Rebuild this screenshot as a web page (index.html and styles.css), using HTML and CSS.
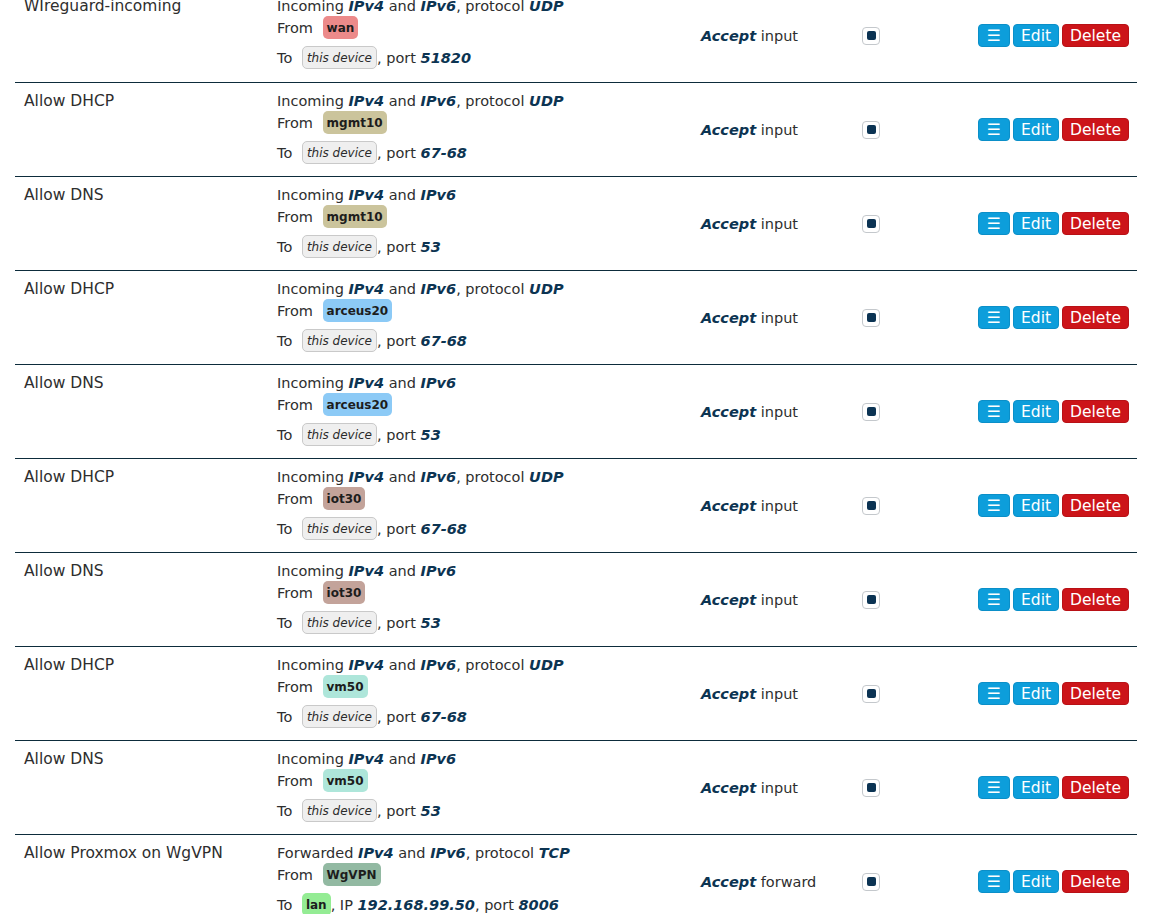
FILE: index.html
```html
<!DOCTYPE html>
<html>
<head>
<meta charset="utf-8">
<link rel="stylesheet" href="styles.css">
</head>
<body>
<div class="table">
  <div class="row">
    <div class="name">WIreguard-incoming</div>
    <div class="match">
      <div class="l1">Incoming <b>IPv4</b> and <b>IPv6</b>, protocol <b>UDP</b></div>
      <div class="l2">From <span class="zone z-wan">wan</span></div>
      <div class="l3">To <span class="dev">this device</span>, port <b>51820</b></div>
    </div>
    <div class="action"><b>Accept</b> input</div>
    <div class="chk"><span class="box"><span class="dot"></span></span></div>
    <div class="btns"><span class="btn blue">☰</span><span class="btn blue">Edit</span><span class="btn red">Delete</span></div>
  </div>
  <div class="row">
    <div class="name">Allow DHCP</div>
    <div class="match">
      <div class="l1">Incoming <b>IPv4</b> and <b>IPv6</b>, protocol <b>UDP</b></div>
      <div class="l2">From <span class="zone z-mgmt">mgmt10</span></div>
      <div class="l3">To <span class="dev">this device</span>, port <b>67-68</b></div>
    </div>
    <div class="action"><b>Accept</b> input</div>
    <div class="chk"><span class="box"><span class="dot"></span></span></div>
    <div class="btns"><span class="btn blue">☰</span><span class="btn blue">Edit</span><span class="btn red">Delete</span></div>
  </div>
  <div class="row">
    <div class="name">Allow DNS</div>
    <div class="match">
      <div class="l1">Incoming <b>IPv4</b> and <b>IPv6</b></div>
      <div class="l2">From <span class="zone z-mgmt">mgmt10</span></div>
      <div class="l3">To <span class="dev">this device</span>, port <b>53</b></div>
    </div>
    <div class="action"><b>Accept</b> input</div>
    <div class="chk"><span class="box"><span class="dot"></span></span></div>
    <div class="btns"><span class="btn blue">☰</span><span class="btn blue">Edit</span><span class="btn red">Delete</span></div>
  </div>
  <div class="row">
    <div class="name">Allow DHCP</div>
    <div class="match">
      <div class="l1">Incoming <b>IPv4</b> and <b>IPv6</b>, protocol <b>UDP</b></div>
      <div class="l2">From <span class="zone z-arceus">arceus20</span></div>
      <div class="l3">To <span class="dev">this device</span>, port <b>67-68</b></div>
    </div>
    <div class="action"><b>Accept</b> input</div>
    <div class="chk"><span class="box"><span class="dot"></span></span></div>
    <div class="btns"><span class="btn blue">☰</span><span class="btn blue">Edit</span><span class="btn red">Delete</span></div>
  </div>
  <div class="row">
    <div class="name">Allow DNS</div>
    <div class="match">
      <div class="l1">Incoming <b>IPv4</b> and <b>IPv6</b></div>
      <div class="l2">From <span class="zone z-arceus">arceus20</span></div>
      <div class="l3">To <span class="dev">this device</span>, port <b>53</b></div>
    </div>
    <div class="action"><b>Accept</b> input</div>
    <div class="chk"><span class="box"><span class="dot"></span></span></div>
    <div class="btns"><span class="btn blue">☰</span><span class="btn blue">Edit</span><span class="btn red">Delete</span></div>
  </div>
  <div class="row">
    <div class="name">Allow DHCP</div>
    <div class="match">
      <div class="l1">Incoming <b>IPv4</b> and <b>IPv6</b>, protocol <b>UDP</b></div>
      <div class="l2">From <span class="zone z-iot">iot30</span></div>
      <div class="l3">To <span class="dev">this device</span>, port <b>67-68</b></div>
    </div>
    <div class="action"><b>Accept</b> input</div>
    <div class="chk"><span class="box"><span class="dot"></span></span></div>
    <div class="btns"><span class="btn blue">☰</span><span class="btn blue">Edit</span><span class="btn red">Delete</span></div>
  </div>
  <div class="row">
    <div class="name">Allow DNS</div>
    <div class="match">
      <div class="l1">Incoming <b>IPv4</b> and <b>IPv6</b></div>
      <div class="l2">From <span class="zone z-iot">iot30</span></div>
      <div class="l3">To <span class="dev">this device</span>, port <b>53</b></div>
    </div>
    <div class="action"><b>Accept</b> input</div>
    <div class="chk"><span class="box"><span class="dot"></span></span></div>
    <div class="btns"><span class="btn blue">☰</span><span class="btn blue">Edit</span><span class="btn red">Delete</span></div>
  </div>
  <div class="row">
    <div class="name">Allow DHCP</div>
    <div class="match">
      <div class="l1">Incoming <b>IPv4</b> and <b>IPv6</b>, protocol <b>UDP</b></div>
      <div class="l2">From <span class="zone z-vm">vm50</span></div>
      <div class="l3">To <span class="dev">this device</span>, port <b>67-68</b></div>
    </div>
    <div class="action"><b>Accept</b> input</div>
    <div class="chk"><span class="box"><span class="dot"></span></span></div>
    <div class="btns"><span class="btn blue">☰</span><span class="btn blue">Edit</span><span class="btn red">Delete</span></div>
  </div>
  <div class="row">
    <div class="name">Allow DNS</div>
    <div class="match">
      <div class="l1">Incoming <b>IPv4</b> and <b>IPv6</b></div>
      <div class="l2">From <span class="zone z-vm">vm50</span></div>
      <div class="l3">To <span class="dev">this device</span>, port <b>53</b></div>
    </div>
    <div class="action"><b>Accept</b> input</div>
    <div class="chk"><span class="box"><span class="dot"></span></span></div>
    <div class="btns"><span class="btn blue">☰</span><span class="btn blue">Edit</span><span class="btn red">Delete</span></div>
  </div>
  <div class="row">
    <div class="name">Allow Proxmox on WgVPN</div>
    <div class="match">
      <div class="l1">Forwarded <b>IPv4</b> and <b>IPv6</b>, protocol <b>TCP</b></div>
      <div class="l2">From <span class="zone z-wg">WgVPN</span></div>
      <div class="l3">To <span class="zone z-lan">lan</span>, IP <b>192.168.99.50</b>, port <b>8006</b></div>
    </div>
    <div class="action"><b>Accept</b> forward</div>
    <div class="chk"><span class="box"><span class="dot"></span></span></div>
    <div class="btns"><span class="btn blue">☰</span><span class="btn blue">Edit</span><span class="btn red">Delete</span></div>
  </div>
</div>
</body>
</html>
```

FILE: styles.css
```css
html, body {
  margin: 0;
  padding: 0;
  background: #ffffff;
}
body {
  font-family: "DejaVu Sans", "Open Sans", sans-serif;
  font-size: 14.5px;
  color: #2e2e2e;
  overflow: hidden;
}
.table {
  margin: -13px 13px 0 15px;
}
.row {
  display: grid;
  grid-template-columns: 262px 424px 161px 60px 1fr;
  height: 94px;
  box-sizing: border-box;
  border-top: 1px solid #0d2c3b;
}
.row:first-child {
  border-top: none;
  height: 95px;
  padding-top: 2px;
}
.row:first-child .name,
.row:first-child .match {
  padding-top: 8px;
}
.name {
  padding: 9px 0 0 9px;
  line-height: 18px;
  font-size: 15.5px;
}
.match {
  padding-top: 9px;
  line-height: 18px;
}
.match b, .action b {
  font-weight: bold;
  font-style: italic;
  color: #0c3452;
}
.l2, .l3 {
  display: flex;
  align-items: center;
  height: 23px;
  white-space: pre;
}
.l2 {
  margin-top: 1px;
}
.l3 {
  margin-top: 7px;
}
.zone {
  display: inline-flex;
  align-items: center;
  height: 23px;
  box-sizing: border-box;
  padding: 0 4px;
  margin-left: 5px;
  border-radius: 5px;
  font-size: 12px;
  font-weight: bold;
  color: #1d1d1d;
}
.z-wan { background: #ec8a8a; }
.z-mgmt { background: #cbc49c; }
.z-arceus { background: #8ccaf6; }
.z-iot { background: #c3a39a; }
.z-vm { background: #aee6da; }
.z-wg { background: #92b9a2; }
.z-lan { background: #94ec94; }
.dev {
  display: inline-flex;
  align-items: center;
  height: 23px;
  box-sizing: border-box;
  padding: 0 4px;
  margin-left: 5px;
  border: 1px solid #c9c9c9;
  border-radius: 5px;
  background: #efefef;
  font-style: italic;
  font-size: 12px;
  color: #2b2b2b;
}
.action {
  align-self: center;
  line-height: 18px;
}
.chk {
  align-self: center;
  display: flex;
}
.box {
  width: 18px;
  height: 18px;
  box-sizing: border-box;
  border: 1px solid #c4c8cc;
  border-radius: 4px;
  background: #fff;
  display: flex;
  align-items: center;
  justify-content: center;
}
.dot {
  width: 9px;
  height: 9px;
  border-radius: 2px;
  background: #0b3353;
}
.btns {
  align-self: center;
  display: flex;
  justify-content: flex-end;
  gap: 3px;
  padding-right: 8px;
}
.btn {
  display: inline-flex;
  align-items: center;
  justify-content: center;
  height: 23px;
  box-sizing: border-box;
  border-radius: 4px;
  color: #ffffff;
  font-size: 15.5px;
  padding: 0 7px;
}
.blue {
  background: #0d9edb;
  border: 1px solid #0b8fc8;
}
.red {
  background: #cc1419;
  border: 1px solid #b81116;
}
.btns .btn:first-child {
  width: 32px;
}
```
